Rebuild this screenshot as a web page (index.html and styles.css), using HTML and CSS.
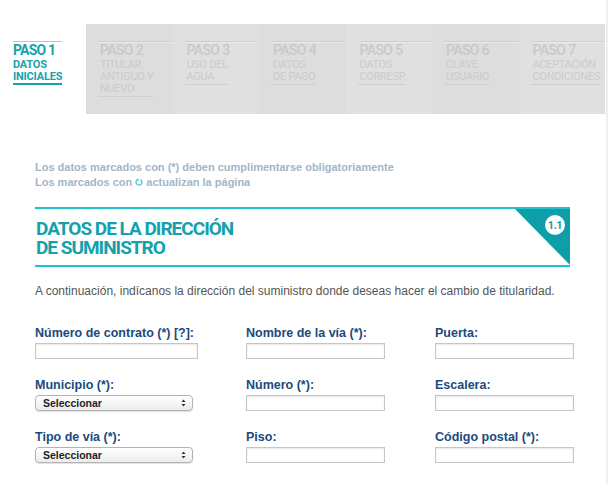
FILE: index.html
```html
<!DOCTYPE html>
<html lang="es">
<head>
<meta charset="utf-8">
<title>Datos de la dirección de suministro</title>
<link rel="stylesheet" href="styles.css">
</head>
<body>
<div class="page">
  <nav class="steps">
    <div class="step step-active">
      <div class="step-inner">
        <div class="step-title">PASO 1</div>
        <div class="step-sub">DATOS<br>INICIALES</div>
      </div>
    </div>
    <div class="step step-off odd">
      <div class="step-inner">
        <div class="step-title">PASO 2</div>
        <div class="step-sub">TITULAR<br>ANTIGUO Y<br>NUEVO</div>
      </div>
    </div>
    <div class="step step-off">
      <div class="step-inner">
        <div class="step-title">PASO 3</div>
        <div class="step-sub">USO DEL<br>AGUA</div>
      </div>
    </div>
    <div class="step step-off odd">
      <div class="step-inner">
        <div class="step-title">PASO 4</div>
        <div class="step-sub">DATOS<br>DE PAGO</div>
      </div>
    </div>
    <div class="step step-off">
      <div class="step-inner">
        <div class="step-title">PASO 5</div>
        <div class="step-sub">DATOS<br>CORRESP.</div>
      </div>
    </div>
    <div class="step step-off odd">
      <div class="step-inner">
        <div class="step-title">PASO 6</div>
        <div class="step-sub">CLAVE<br>USUARIO</div>
      </div>
    </div>
    <div class="step step-off">
      <div class="step-inner">
        <div class="step-title">PASO 7</div>
        <div class="step-sub">ACEPTACIÓN<br>CONDICIONES</div>
      </div>
    </div>
  </nav>

  <main class="content">
    <p class="notice">Los datos marcados con (*) deben cumplimentarse obligatoriamente<br>Los marcados con <svg class="refresh" width="8" height="9" viewBox="0 0 8 9"><path d="M5.6 1.6 A3 3 0 1 1 2.2 1.7" fill="none" stroke="#4fc6d4" stroke-width="1.3"/><path d="M3.6 0.2 L1.4 1.8 L3.8 3.0 Z" fill="#4fc6d4"/></svg> actualizan la página</p>

    <section class="section-head">
      <h1 class="section-title">DATOS DE LA DIRECCIÓN<br>DE SUMINISTRO</h1>
      <svg class="corner" width="55" height="56" viewBox="0 0 55 56">
        <polygon points="0,0 55,0 55,56" fill="#0e9ea8"/>
        <circle cx="40" cy="16" r="10" fill="#ffffff"/>
        <text x="40" y="20" text-anchor="middle" font-family="Roboto, sans-serif" font-weight="700" font-size="11" fill="#0e9ea8" letter-spacing="-0.5">1.1</text>
      </svg>
    </section>

    <p class="intro">A continuación, indícanos la dirección del suministro donde deseas hacer el cambio de titularidad.</p>

    <form class="form-grid">
      <div class="field">
        <label class="label">Número de contrato (*) [?]:</label>
        <div class="input input-wide"></div>
      </div>
      <div class="field">
        <label class="label">Nombre de la vía (*):</label>
        <div class="input"></div>
      </div>
      <div class="field">
        <label class="label">Puerta:</label>
        <div class="input"></div>
      </div>

      <div class="field">
        <label class="label">Municipio (*):</label>
        <div class="select"><span>Seleccionar</span><svg width="5" height="8" viewBox="0 0 5 8"><path d="M0.5 3 L2.5 0.5 L4.5 3 Z M0.5 5 L2.5 7.5 L4.5 5 Z" fill="#333"/></svg></div>
      </div>
      <div class="field">
        <label class="label">Número (*):</label>
        <div class="input"></div>
      </div>
      <div class="field">
        <label class="label">Escalera:</label>
        <div class="input"></div>
      </div>

      <div class="field">
        <label class="label">Tipo de vía (*):</label>
        <div class="select"><span>Seleccionar</span><svg width="5" height="8" viewBox="0 0 5 8"><path d="M0.5 3 L2.5 0.5 L4.5 3 Z M0.5 5 L2.5 7.5 L4.5 5 Z" fill="#333"/></svg></div>
      </div>
      <div class="field">
        <label class="label">Piso:</label>
        <div class="input"></div>
      </div>
      <div class="field">
        <label class="label">Código postal (*):</label>
        <div class="input"></div>
      </div>
    </form>
  </main>
</div>
</body>
</html>
```

FILE: styles.css
```css
* { box-sizing: border-box; }

html, body {
  margin: 0;
  padding: 0;
  background: #ffffff;
}

.page {
  width: 608px;
  min-height: 484px;
  border-right: 2px solid #efefef;
  padding-top: 24px;
}

/* ---------- steps ---------- */
.steps {
  display: flex;
  height: 90px;
}

.step {
  width: 86.5px;
  padding-top: 17px;
  padding-left: 12px;
  font-family: Roboto, "Liberation Sans", sans-serif;
}

.step-active {
  width: 86px;
  padding-left: 13px;
}

.step-off { background: #e0e0e0; }
.step-off.odd { background: #dddddd; }

.step-inner {
  border-top: 1px solid #cfcfcf;
  box-shadow: inset 0 1px 0 #e9e9e9;
}

.step-active .step-inner {
  display: inline-block;
  border-top: 1px solid #93d7dd;
  box-shadow: none;
}

.step-title {
  font-size: 14px;
  line-height: 16px;
  font-weight: 500;
  letter-spacing: -0.6px;
  color: #c9c9c9;
  padding-left: 2px;
}

.step-sub {
  display: inline-block;
  margin-top: 1px;
  padding-left: 2px;
  padding-bottom: 1px;
  font-size: 11px;
  line-height: 12px;
  letter-spacing: -0.3px;
  color: #cbcbcb;
  border-bottom: 1px solid #cfcfcf;
}

.step-active .step-title {
  font-weight: 700;
  color: #15a3ae;
  padding-left: 0;
  letter-spacing: -0.8px;
}

.step-active .step-sub {
  font-weight: 700;
  color: #15a3ae;
  padding-left: 0;
  letter-spacing: -0.2px;
  padding-bottom: 0;
  border-bottom: 2px solid #15a3ae;
}

/* ---------- content ---------- */
.content {
  padding-left: 35px;
}

.notice {
  margin: 46px 0 0 0;
  font-family: "Liberation Sans", Arial, sans-serif;
  font-size: 11px;
  line-height: 15px;
  font-weight: 700;
  color: #a2b6c6;
}

.refresh {
  vertical-align: -1px;
}

.section-head {
  width: 535px;
  margin-top: 17px;
  display: flex;
  justify-content: space-between;
  border-top: 2px solid #20c2ce;
  border-bottom: 2px solid #20c2ce;
}

.section-title {
  margin: 0;
  padding: 10px 0 8px 1px;
  font-family: Roboto, "Liberation Sans", sans-serif;
  font-size: 19px;
  line-height: 19px;
  font-weight: 700;
  letter-spacing: -1px;
  color: #14a1ac;
}

.corner {
  display: block;
  flex: none;
}

.intro {
  margin: 17px 0 0 0;
  font-family: "Liberation Sans", Arial, sans-serif;
  font-size: 12px;
  line-height: 15px;
  color: #555555;
}

/* ---------- form ---------- */
.form-grid {
  margin-top: 27px;
  display: grid;
  grid-template-columns: 211px 189px 140px;
  row-gap: 19px;
}

.field {
  display: flex;
  flex-direction: column;
  align-items: flex-start;
}

.label {
  font-family: "Liberation Sans", Arial, sans-serif;
  font-size: 12.5px;
  line-height: 14px;
  font-weight: 700;
  color: #1b4a7b;
  margin-bottom: 3px;
}

.input {
  width: 139px;
  height: 16px;
  border: 1px solid #c6c6c6;
  background: #ffffff;
  box-shadow: inset 0 1px 2px rgba(0, 0, 0, 0.10);
}

.input-wide { width: 163px; }

.select {
  width: 158px;
  height: 16px;
  display: flex;
  align-items: center;
  justify-content: space-between;
  padding: 0 6px 0 7px;
  border: 1px solid #b3b3b3;
  border-radius: 4px;
  background: linear-gradient(#ffffff, #ececec);
  box-shadow: 0 1px 1px rgba(0, 0, 0, 0.12);
  font-family: "Liberation Sans", Arial, sans-serif;
  font-size: 10.5px;
  font-weight: 700;
  color: #222222;
}

.select svg { display: block; }
```
